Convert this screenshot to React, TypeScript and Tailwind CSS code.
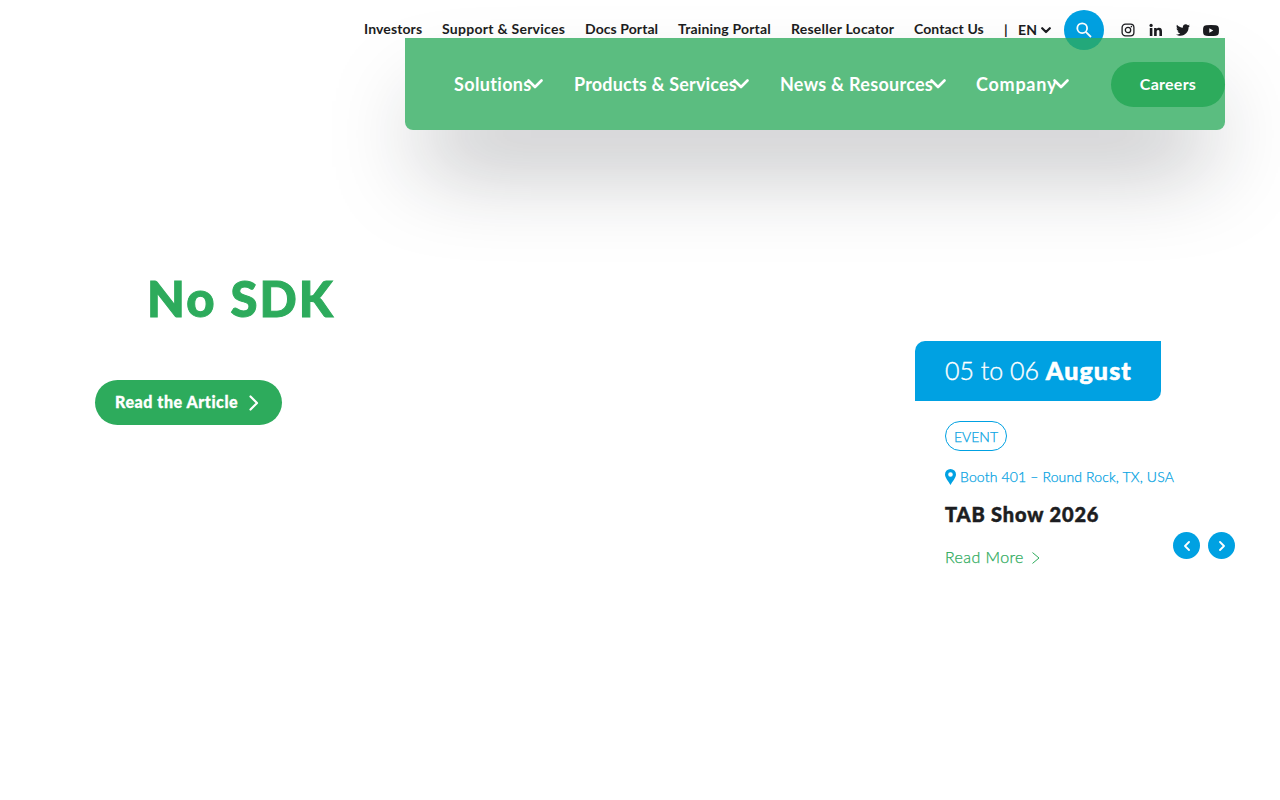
import { FaTwitter } from "react-icons/fa6";

const topLinks = [
  { label: "Investors", cls: "w-[58px] tracking-[0.12px]" },
  { label: "Support & Services", cls: "w-[123px] tracking-[0.27px]" },
  { label: "Docs Portal", cls: "w-[73px] tracking-[0.08px]" },
  { label: "Training Portal", cls: "w-[93px] tracking-[0.17px]" },
  { label: "Reseller Locator", cls: "w-[103px] tracking-[0.23px]" },
  { label: "Contact Us", cls: "w-[70px] tracking-[0.1px]" },
];

const mainLinks = [
  { label: "Solutions", cls: "w-[120px]", text: "w-[73px] tracking-[0.35px]" },
  { label: "Products & Services", cls: "w-[206px]", text: "w-[159px] tracking-[0.18px]" },
  { label: "News & Resources", cls: "w-[196px]", text: "w-[150px] tracking-[0.28px]" },
  { label: "Company", cls: "w-[135px]", text: "w-[77px] tracking-[0.75px]" },
];

function Chevron({ d, box, className, width }: { d: string; box: string; className: string; width: number }) {
  return (
    <svg viewBox={box} className={className} fill="none" stroke="currentColor" strokeWidth={width} strokeLinecap="round" strokeLinejoin="round">
      <path d={d} />
    </svg>
  );
}

function TopBar() {
  return (
    <div className="flex h-[60px] items-start pl-[364px] pt-[10px] text-[14px] font-bold text-[#1c1d21]">
      <nav className="flex h-10 items-center gap-5 whitespace-nowrap pb-[3px]">
        {topLinks.map((l) => (
          <a key={l.label} className={l.cls}>{l.label}</a>
        ))}
      </nav>
      <div className="ml-5 flex h-10 items-center">
        <span className="w-[14px] pb-px">|</span>
        <span className="w-[23px] pb-px tracking-[0.2px]">EN</span>
        <Chevron d="M1.2 1.2 5 5 8.8 1.2" box="0 0 10 7" className="h-[7px] w-[10px]" width={2.2} />
      </div>
      <button className="ml-[13px] flex size-10 items-center justify-center rounded-full bg-[#00a1e2]">
        <svg viewBox="0 0 16 16" className="size-4" fill="none" stroke="#fff" strokeWidth="1.8">
          <circle cx="6.2" cy="6.2" r="4.9" />
          <path d="m9.8 9.8 5.2 5.2" />
        </svg>
      </button>
      <div className="flex h-10 items-center pl-[17px]">
        <svg viewBox="0 0 14 14" className="size-[14px]" fill="none" stroke="currentColor" strokeWidth="1.3">
          <rect x="1.1" y="1.1" width="11.8" height="11.8" rx="3.4" />
          <circle cx="7" cy="7" r="2.7" />
          <circle cx="10.4" cy="3.6" r="0.8" fill="currentColor" stroke="none" />
        </svg>
        <svg viewBox="0 0 14 14" className="ml-[14px] size-[14px]" fill="currentColor">
          <circle cx="2.1" cy="2.4" r="1.6" />
          <path d="M.8 5h2.6v8H.8ZM5.1 5h2.5v1.1C8.1 5.3 9 4.8 10 4.8c2.4 0 3 1.6 3 3.8V13h-2.6V9.1c0-1 0-2.1-1.3-2.1S7.7 8 7.7 9v4H5.1Z" />
        </svg>
        <FaTwitter className="ml-[13px] size-[14px]" />
        <svg viewBox="0 0 16 11" className="ml-[13px] h-[11px] w-4">
          <path fill="currentColor" fillRule="evenodd" d="M3 .2Q8-.2 13 .2 15.6.4 15.8 2.8 16.1 5.5 15.8 8.2 15.6 10.6 13 10.8 8 11.2 3 10.8.4 10.6.2 8.2-.1 5.5.2 2.8.4.4 3 .2ZM6.3 3.2v4.6l4-2.3Z" />
        </svg>
      </div>
    </div>
  );
}

function MainNav() {
  return (
    <div className="relative -mt-[22px] ml-[405px] flex h-[92px] w-[820px] items-center rounded-b-lg bg-[#2dab5c]/78 pl-[49px] text-white shadow-[0_50px_90px_-18px_rgba(26,30,36,0.35)]">
      {mainLinks.map((l) => (
        <a key={l.label} className={`flex shrink-0 items-center whitespace-nowrap text-[18px] font-bold ${l.cls}`}>
          <span className={l.text}>{l.label}</span>
          <Chevron d="M1.5 1.5 8 8 14.5 1.5" box="0 0 16 10" className="h-[10px] w-4 shrink-0" width={2.6} />
        </a>
      ))}
      <button className="flex h-[45px] w-[114px] shrink-0 items-center justify-center rounded-full bg-[#2dab5c] text-[16px] font-bold tracking-[0.25px]">Careers</button>
    </div>
  );
}

function Hero() {
  return (
    <section className="w-[300px] pt-[132px]">
      <h1 className="ml-[52px] flex h-[72px] items-center whitespace-nowrap text-[49px] font-black leading-none tracking-[2.1px] text-[#2dab5c] [-webkit-text-stroke:1px_#2dab5c]">No SDK</h1>
      <a className="mt-[46px] flex h-[45px] w-[187px] items-center rounded-full bg-[#2dab5c] pl-5 text-[16px] font-black text-white [-webkit-text-stroke:0.3px_#fff]">
        <span className="w-[134px] whitespace-nowrap pb-px tracking-[0.55px]">Read the Article</span>
        <Chevron d="M1.5 1.5 8 8 1.5 14.5" box="0 0 10 16" className="h-4 w-[10px]" width={2.2} />
      </a>
    </section>
  );
}

function EventCard() {
  return (
    <aside className="relative w-[320px] pt-[211px]">
      <div className="flex h-[60px] w-[246px] items-center whitespace-pre rounded-br-[10px] rounded-tl-[10px] bg-[#00a1e2] pl-[30px] text-[25px] font-light text-white">
        <span className="[-webkit-text-stroke:0.35px_#fff]">05 to 06 </span>
        <strong className="font-black tracking-[1.1px] [-webkit-text-stroke:0.6px_#fff]">August</strong>
      </div>
      <div className="pl-[30px] text-[#00a1e2]">
        <span className="mt-5 flex h-[30px] w-[62px] items-center justify-center rounded-full border border-[#00a1e2] text-[14px] font-light [-webkit-text-stroke:0.25px_#00a1e2]">EVENT</span>
        <p className="mt-4 flex h-[20px] items-center whitespace-nowrap text-[14px] font-light tracking-[0.15px] [-webkit-text-stroke:0.25px_#00a1e2]">
          <svg viewBox="0 0 11 16" className="mr-1 h-4 w-[11px]">
            <path fill="currentColor" fillRule="evenodd" d="M5.5 0A5.5 5.5 0 0 1 11 5.5C11 8.7 7.4 12.6 5.5 16 3.6 12.6 0 8.7 0 5.5A5.5 5.5 0 0 1 5.5 0Zm0 3.2a2.3 2.3 0 1 0 0 4.6 2.3 2.3 0 0 0 0-4.6Z" />
          </svg>
          <span className="pb-[2px]">Booth 401 – Round Rock, TX, USA</span>
        </p>
        <h2 className="mt-[13px] flex h-[28px] items-center whitespace-nowrap text-[20px] font-black tracking-[0.85px] text-[#1c1d21] [-webkit-text-stroke:0.5px_#1c1d21]">TAB Show 2026</h2>
        <a className="mt-[18px] flex h-[24px] items-center whitespace-nowrap text-[16px] font-light text-[#2dab5c]">
          <span className="w-[87px] pb-[2px] tracking-[0.4px] [-webkit-text-stroke:0.25px_#2dab5c]">Read More</span>
          <Chevron d="M.8.8 7 6 .8 11.2" box="0 0 8 12" className="h-3 w-2" width={1} />
        </a>
      </div>
      <div className="absolute left-[258px] top-[402.4px] flex gap-2 text-white">
        <button className="flex size-[27px] items-center justify-center rounded-full bg-[#00a1e2]">
          <Chevron d="M5 1 1 5 5 9" box="0 0 6 10" className="h-[10px] w-[6px]" width={1.8} />
        </button>
        <button className="flex size-[27px] items-center justify-center rounded-full bg-[#00a1e2]">
          <Chevron d="M1 1 5 5 1 9" box="0 0 6 10" className="h-[10px] w-[6px]" width={1.8} />
        </button>
      </div>
    </aside>
  );
}

export default function App() {
  return (
    <div className="h-[800px] w-[1280px] overflow-hidden bg-white font-['Lato','Open_Sans',sans-serif]">
      <header>
        <TopBar />
        <MainNav />
      </header>
      <main className="flex justify-between pl-[95px] pr-[45px]">
        <Hero />
        <EventCard />
      </main>
    </div>
  );
}
